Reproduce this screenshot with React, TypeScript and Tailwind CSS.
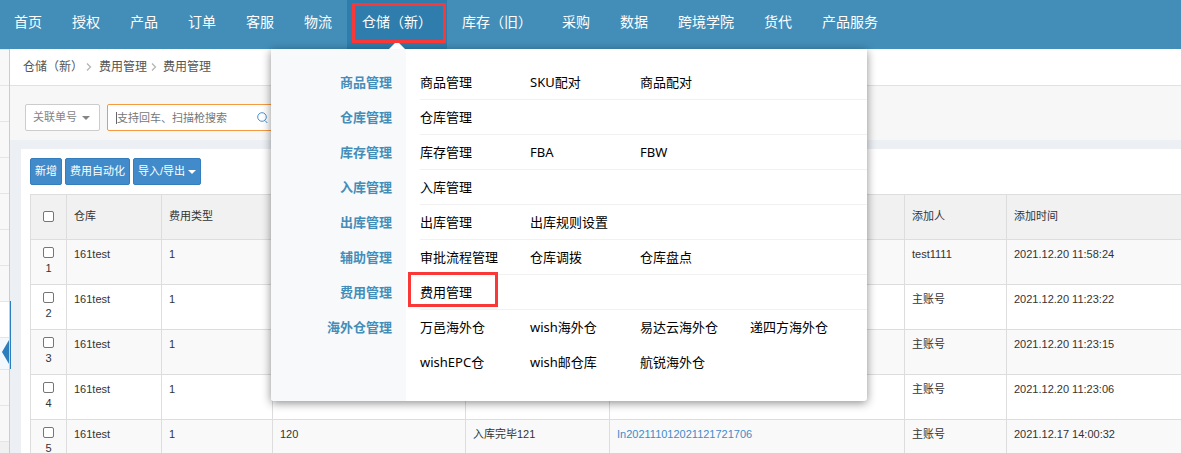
import React from 'react';

const NAV_BEFORE = ['首页', '授权', '产品', '订单', '客服', '物流'];
const NAV_AFTER = ['库存（旧）', '采购', '数据', '跨境学院', '货代', '产品服务'];

const MENU = [
  { title: '商品管理', links: ['商品管理', 'SKU配对', '商品配对'] },
  { title: '仓库管理', links: ['仓库管理'] },
  { title: '库存管理', links: ['库存管理', 'FBA', 'FBW'] },
  { title: '入库管理', links: ['入库管理'] },
  { title: '出库管理', links: ['出库管理', '出库规则设置'] },
  { title: '辅助管理', links: ['审批流程管理', '仓库调拨', '仓库盘点'] },
  { title: '费用管理', links: ['费用管理'], marked: true },
  {
    title: '海外仓管理',
    links: ['万邑海外仓', 'wish海外仓', '易达云海外仓', '递四方海外仓', 'wishEPC仓', 'wish邮仓库', '航锐海外仓'],
  },
];

const ROWS = [
  { user: 'test1111', time: '2021.12.20 11:58:24' },
  { user: '主账号', time: '2021.12.20 11:23:22' },
  { user: '主账号', time: '2021.12.20 11:23:15' },
  { user: '主账号', time: '2021.12.20 11:23:06' },
  { user: '主账号', time: '2021.12.17 14:00:32', amount: '120', note: '入库完毕121', order: 'In202111012021121721706' },
];

const checkboxClass =
  'block mx-auto w-[11px] h-[11px] appearance-none rounded-[2px] border border-[#767676] bg-white checked:bg-[#428bca]';

const NavLink: React.FC<{ label: string }> = ({ label }) => (
  <a href="#" className="flex h-full items-center px-[15px] pb-[6px] whitespace-nowrap">
    {label}
  </a>
);

const Caret: React.FC<{ className?: string }> = ({ className }) => (
  <svg width="8" height="4" viewBox="0 0 8 4" className={className} aria-hidden="true">
    <path d="M0 0h8L4 4z" fill="currentColor" />
  </svg>
);

const Chevron = () => (
  <svg width="6" height="8" viewBox="0 0 6 8" fill="none" stroke="#b5b5b5" strokeWidth="1.3" aria-hidden="true">
    <path d="M1 0.5l3.5 3.5L1 7.5" />
  </svg>
);

const MegaMenu = () => (
  <div className="absolute left-[-76px] top-full z-20 flex w-[596px] rounded-b-[3px] bg-white font-['Noto_Sans','Noto_Sans_CJK_SC',sans-serif] text-[13px] text-black shadow-[0_2px_10px_rgba(0,0,0,0.45)]">
    <svg width="16" height="6" viewBox="0 0 16 6" className="absolute left-[118px] -top-[6px]" aria-hidden="true">
      <path d="M0 6L6 0h4l6 6z" fill="#fff" />
    </svg>
    <div className="w-[135px] rounded-bl-[3px] bg-[#f8f9fb] pt-4 pr-[14px] text-right font-bold text-[#438eb9]">
      {MENU.map((group) => (
        <h3 key={group.title} className="flex h-[35px] items-center justify-end">
          {group.title}
        </h3>
      ))}
    </div>
    <div className="flex-1 pt-4 pb-[21px] pl-[14px]">
      {MENU.map((group) => (
        <ul key={group.title} className="flex flex-wrap border-b border-[#f1f1f1] last:border-b-0">
          {group.links.map((link) => (
            <li key={link} className={`relative flex w-[110px] items-center ${group.links.length < 5 ? 'h-[34px]' : 'h-[35px]'}`}>
              <a href="#" className="whitespace-nowrap">{link}</a>
              {group.marked && (
                <span className="absolute -left-3 -top-[3px] h-[35px] w-[90px] border-3 border-[#fb3838]" />
              )}
            </li>
          ))}
        </ul>
      ))}
    </div>
  </div>
);

const Header = () => (
  <header className="h-[49px] shrink-0 bg-[#438eb9] text-sm text-white">
    <nav className="-ml-px flex h-full items-center">
      {NAV_BEFORE.map((label) => (
        <NavLink key={label} label={label} />
      ))}
      <div className="relative h-full bg-[#2e7dac]">
        <NavLink label="仓储（新）" />
        <MegaMenu />
        <span className="absolute left-[5px] top-[3px] z-30 h-10 w-[94px] border-3 border-[#fb3838]" />
      </div>
      {NAV_AFTER.map((label) => (
        <NavLink key={label} label={label} />
      ))}
    </nav>
  </header>
);

const Sidebar = () => (
  <aside className="relative w-[10px] shrink-0 border-r border-[#ccc] bg-[#f8f8f8]">
    <div className="h-px bg-[#e5e5e5]" />
    {Array.from({ length: 7 }, (_, i) => (
      <div key={i} className="h-9 border-b border-[#e5e5e5]" />
    ))}
    <div className="h-9 border-b border-[#e5e5e5] bg-white" />
    <div className="h-8 border-b border-[#e5e5e5] bg-[#f3f8fc]" />
    <div className="h-9 border-b border-[#e5e5e5]" />
    <div className="h-9 border-b border-[#e5e5e5]" />
    <div className="h-9 bg-[#f0f0f0]" />
    <span className="absolute left-[10px] top-[252px] h-[68px] w-px bg-[#2b7dbc]" />
    <svg width="7" height="24" viewBox="0 0 7 24" className="absolute left-[2px] top-[291px]" aria-hidden="true">
      <path d="M7 0v24L0 12z" fill="#2b7dbc" />
    </svg>
  </aside>
);

const Breadcrumb = () => (
  <div className="flex h-[37px] items-center border-b border-[#e1e1e1] bg-white pl-[13px] text-xs text-[#555]">
    <a href="#">仓储（新）</a>
    <span className="mr-[7px] ml-[3px]"><Chevron /></span>
    <a href="#">费用管理</a>
    <span className="mr-[6px] ml-1"><Chevron /></span>
    <span>费用管理</span>
  </div>
);

const SearchBar = () => (
  <div className="flex gap-[7px] bg-[#f7f7f7] pt-[18px] pb-[9px] pl-[15px]">
    <button className="flex h-[27px] w-[75px] items-center justify-center gap-[5px] rounded-[2px] border border-[#ccc] bg-white pr-[2px] text-[11px] text-[#858585]">
      关联单号
      <Caret />
    </button>
    <div className="flex h-[27px] w-[180px] items-center rounded-[2px] border border-[#f59942] bg-white px-2">
      <input
        aria-label="搜索"
        placeholder="支持回车、扫描枪搜索"
        className="w-[141px] border-l border-[#666] text-[11px] leading-3 outline-none placeholder:text-[#777]"
      />
      <svg width="11" height="12" viewBox="0 0 11 12" fill="none" stroke="#4a90d0" aria-label="搜索">
        <circle cx="5" cy="5" r="4.3" />
        <path d="M8 8.5l2.3 2.5" />
      </svg>
    </div>
  </div>
);

const toolbarButton =
  'flex h-[27px] items-center gap-[3px] rounded-[2px] border border-[#357ebd] bg-[#428bca] px-1 text-[11px] text-white';

const FeeTable = () => (
  <table className="mt-[9px] w-full table-fixed border-collapse text-left text-[11px] leading-4 text-[#333]">
    <colgroup>
      <col className="w-9" />
      <col className="w-[95px]" />
      <col className="w-[111px]" />
      <col className="w-[193px]" />
      <col className="w-[144px]" />
      <col className="w-[295px]" />
      <col className="w-[102px]" />
      <col />
    </colgroup>
    <thead>
      <tr className="h-[45px] bg-[#f1f1f1] *:border *:border-r-0 *:border-[#ddd] *:px-[7px] *:pb-[2px] *:font-normal">
        <th><input type="checkbox" aria-label="全选" className={checkboxClass} /></th>
        <th>仓库</th>
        <th>费用类型</th>
        <th />
        <th />
        <th />
        <th>添加人</th>
        <th>添加时间</th>
      </tr>
    </thead>
    <tbody>
      {ROWS.map((row, i) => (
        <tr
          key={row.time}
          className="h-[45px] align-top odd:bg-[#f9f9f9] *:border *:border-r-0 *:border-[#ddd] *:px-[7px] *:pt-[6px]"
        >
          <td className="text-center">
            <label>
              <input type="checkbox" className={`mt-px mb-[2px] ${checkboxClass}`} />
              {i + 1}
            </label>
          </td>
          <td>161test</td>
          <td>1</td>
          <td>{row.amount}</td>
          <td>{row.note}</td>
          <td>{row.order && <a href="#" className="text-[#428bca]">{row.order}</a>}</td>
          <td>{row.user}</td>
          <td>{row.time}</td>
        </tr>
      ))}
    </tbody>
  </table>
);

const App: React.FC = () => {
  return (
    <div className="flex h-screen flex-col overflow-hidden bg-[#ecf0f5] font-['Liberation_Sans','Noto_Sans_CJK_SC',sans-serif]">
      <Header />
      <div className="flex min-h-0 flex-1">
        <Sidebar />
        <main className="min-w-0 flex-1">
          <Breadcrumb />
          <SearchBar />
          <section className="mt-[9px] ml-[11px] bg-white pt-[9px] pl-[9px]">
            <div className="flex gap-[3px]">
              <button className={toolbarButton}>新增</button>
              <button className={toolbarButton}>费用自动化</button>
              <button className={toolbarButton}>
                导入/导出
                <Caret />
              </button>
            </div>
            <FeeTable />
          </section>
        </main>
      </div>
    </div>
  );
};

export default App;
